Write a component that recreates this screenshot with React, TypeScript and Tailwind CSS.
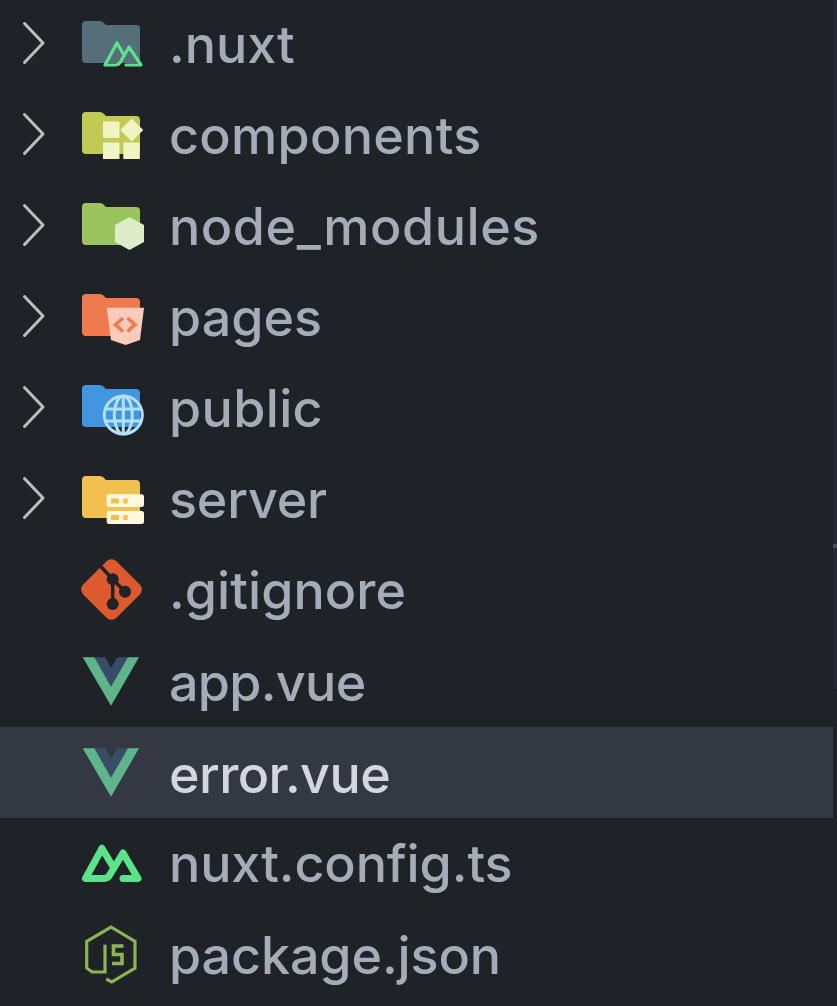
import React from 'react';

const FOLDER = 'M4 15a4 4 0 0 1 4-4h14a5 5 0 0 1 3.5 1.5L28 15h30a4 4 0 0 1 4 4v30a4 4 0 0 1-4 4H8a4 4 0 0 1-4-4z';

const Chevron = () => (
  <svg width="30" height="60" viewBox="0 0 30 60" fill="none" stroke="#bdbdbd" strokeWidth="3" strokeLinecap="round" strokeLinejoin="round">
    <path d="M6.500 8.500 25 28 6.500 47.500" />
  </svg>
);

const NuxtFolder = () => (
  <>
    <path d={FOLDER} fill="#546e7a" />
    <path d="M39 33 27 55h10q4 0 6-4l8-14 12 18H48M39 33l7 12" fill="none" stroke="#5be38a" strokeWidth="3.200" strokeLinejoin="round" strokeLinecap="round" />
  </>
);

const ComponentsFolder = () => (
  <>
    <path d={FOLDER} fill="#c2ca55" />
    <path d="M25 20.500h16.500v16.500H25zM25 41.500h16.500V58H25zM45.300 41.500h16.500V58H45.300zM53.700 17.500 65.200 29 53.700 40.500 42.200 29z" fill="#f0f4c3" />
  </>
);

const NodeFolder = () => (
  <>
    <path d={FOLDER} fill="#9bc45e" />
    <path d="M51.500 25 66 33v17l-14.500 8L37 50V33z" fill="#dcedc8" />
  </>
);

const PagesFolder = () => (
  <>
    <path d={FOLDER} fill="#f07a50" />
    <path d="M28.700 24.700H66L62 57l-14.300 5L33 57z" fill="#fccbbb" />
    <path d="M45 35l-7.500 6.700L45 48.500M49.500 35l7.500 6.700-7.500 6.800" fill="none" stroke="#f07a50" strokeWidth="3.600" />
  </>
);

const PublicFolder = () => (
  <>
    <path d={FOLDER} fill="#4296e0" />
    <g fill="none" stroke="#b3e0ff" strokeWidth="3">
      <circle cx="45.300" cy="41" r="19" />
      <ellipse cx="45.300" cy="41" rx="9" ry="19" />
      <path d="M27 35h36.600M27 47h36.600M45.300 22v38" />
    </g>
  </>
);

const ServerFolder = () => (
  <>
    <path d={FOLDER} fill="#f2c04f" />
    <rect x="28.700" y="29.300" width="37.300" height="12.700" rx="2.500" fill="#fff8e1" />
    <rect x="28.700" y="46" width="37.300" height="13" rx="2.500" fill="#fff8e1" />
    <path d="M33 33.500h8v5h-8zM45.300 33.500h4.400v5h-4.400zM33 50h8v5h-8zM45.300 50h4.400v5h-4.400z" fill="#f2c04f" />
  </>
);

const GitIcon = () => (
  <>
    <rect x="10" y="10" width="47" height="47" rx="7" transform="rotate(45 33.500 33.500)" fill="#dd5a2f" />
    <path d="M20.500 8 34.700 23.300V48M34.700 23.300 47 35.700" fill="none" stroke="#1f2328" strokeWidth="3.500" />
    <circle cx="34.700" cy="23.300" r="6" fill="#1f2328" />
    <circle cx="47" cy="35.700" r="6" fill="#1f2328" />
    <circle cx="34.700" cy="48" r="6" fill="#1f2328" />
  </>
);

const VueIcon = () => (
  <>
    <path d="M16.300 10.300H27L33 21l6.300-10.700h11L33 40z" fill="#384c68" />
    <path d="M4.700 10.300H16.300L33 39.700 50 10.300H61L33 58.700z" fill="#5fb58a" />
  </>
);

const NuxtIcon = () => (
  <path d="M24 20.500 7.500 50.500H26q4 0 6-4L45 25l15 25.500H45M24 20.500 34 37" fill="none" stroke="#5be38a" strokeWidth="7" strokeLinejoin="round" strokeLinecap="round" />
);

const JsIcon = () => (
  <g fill="none" stroke="#8bb550" strokeWidth="3.200">
    <path d="M27 25.700V53H14l-5.300-4V22.300L33 8l24 14.300V49L33.700 63l-5.500-3" />
    <path d="M45.500 27H35.500v8.500H44v9H34" strokeWidth="3.600" />
  </g>
);

// tracking per row: the installed Inter doesn't space quite like the one in the shot
const rows: { name: string; icon: React.ReactNode; folder?: boolean; selected?: boolean; text: string }[] = [
  { name: '.nuxt', icon: <NuxtFolder />, folder: true, text: 'tracking-[-0.06px]' },
  { name: 'components', icon: <ComponentsFolder />, folder: true, text: 'tracking-[0.3px]' },
  { name: 'node_modules', icon: <NodeFolder />, folder: true, text: 'tracking-[0.59px]' },
  { name: 'pages', icon: <PagesFolder />, folder: true, text: 'tracking-[0px]' },
  { name: 'public', icon: <PublicFolder />, folder: true, text: 'tracking-[0.37px]' },
  { name: 'server', icon: <ServerFolder />, folder: true, text: 'tracking-[-0.17px]' },
  { name: '.gitignore', icon: <GitIcon />, text: 'tracking-[0.06px]' },
  { name: 'app.vue', icon: <VueIcon />, text: 'tracking-[-0.68px] pt-[3px]' },
  { name: 'error.vue', icon: <VueIcon />, selected: true, text: 'tracking-[-0.56px] pt-[4px]' },
  { name: 'nuxt.config.ts', icon: <NuxtIcon />, text: 'tracking-[-0.1px] pt-[2px]' },
  { name: 'package.json', icon: <JsIcon />, text: 'tracking-[-0.09px] pt-[4px]' },
];

export default function App() {
  return (
    <div className="flex h-[1006px] w-[837px] overflow-hidden bg-[#1f2328] font-['Inter',sans-serif]">
      <div className="flex-1">
        {rows.map(row => (
          <div key={row.name} className={`flex h-[90.9px] items-center ${row.selected ? 'bg-[#343842]' : ''}`}>
            <div className="w-[78px] shrink-0 pl-[18px]">{row.folder && <Chevron />}</div>
            <svg width="70" height="70" viewBox="0 0 70 70" className="shrink-0">{row.icon}</svg>
            <span className={`ml-[21px] text-[52px] font-[450] leading-none ${row.text} ${row.selected ? 'text-[#d4d6de]' : 'text-[#a6abb8]'}`}>{row.name}</span>
          </div>
        ))}
      </div>
      <div className="relative w-1 shrink-0">
        <div className="h-[689px] bg-[#262931]" />
        <div className="absolute left-0 top-[544px] h-1 w-1 bg-[#4a4e59]" />
      </div>
    </div>
  );
}
